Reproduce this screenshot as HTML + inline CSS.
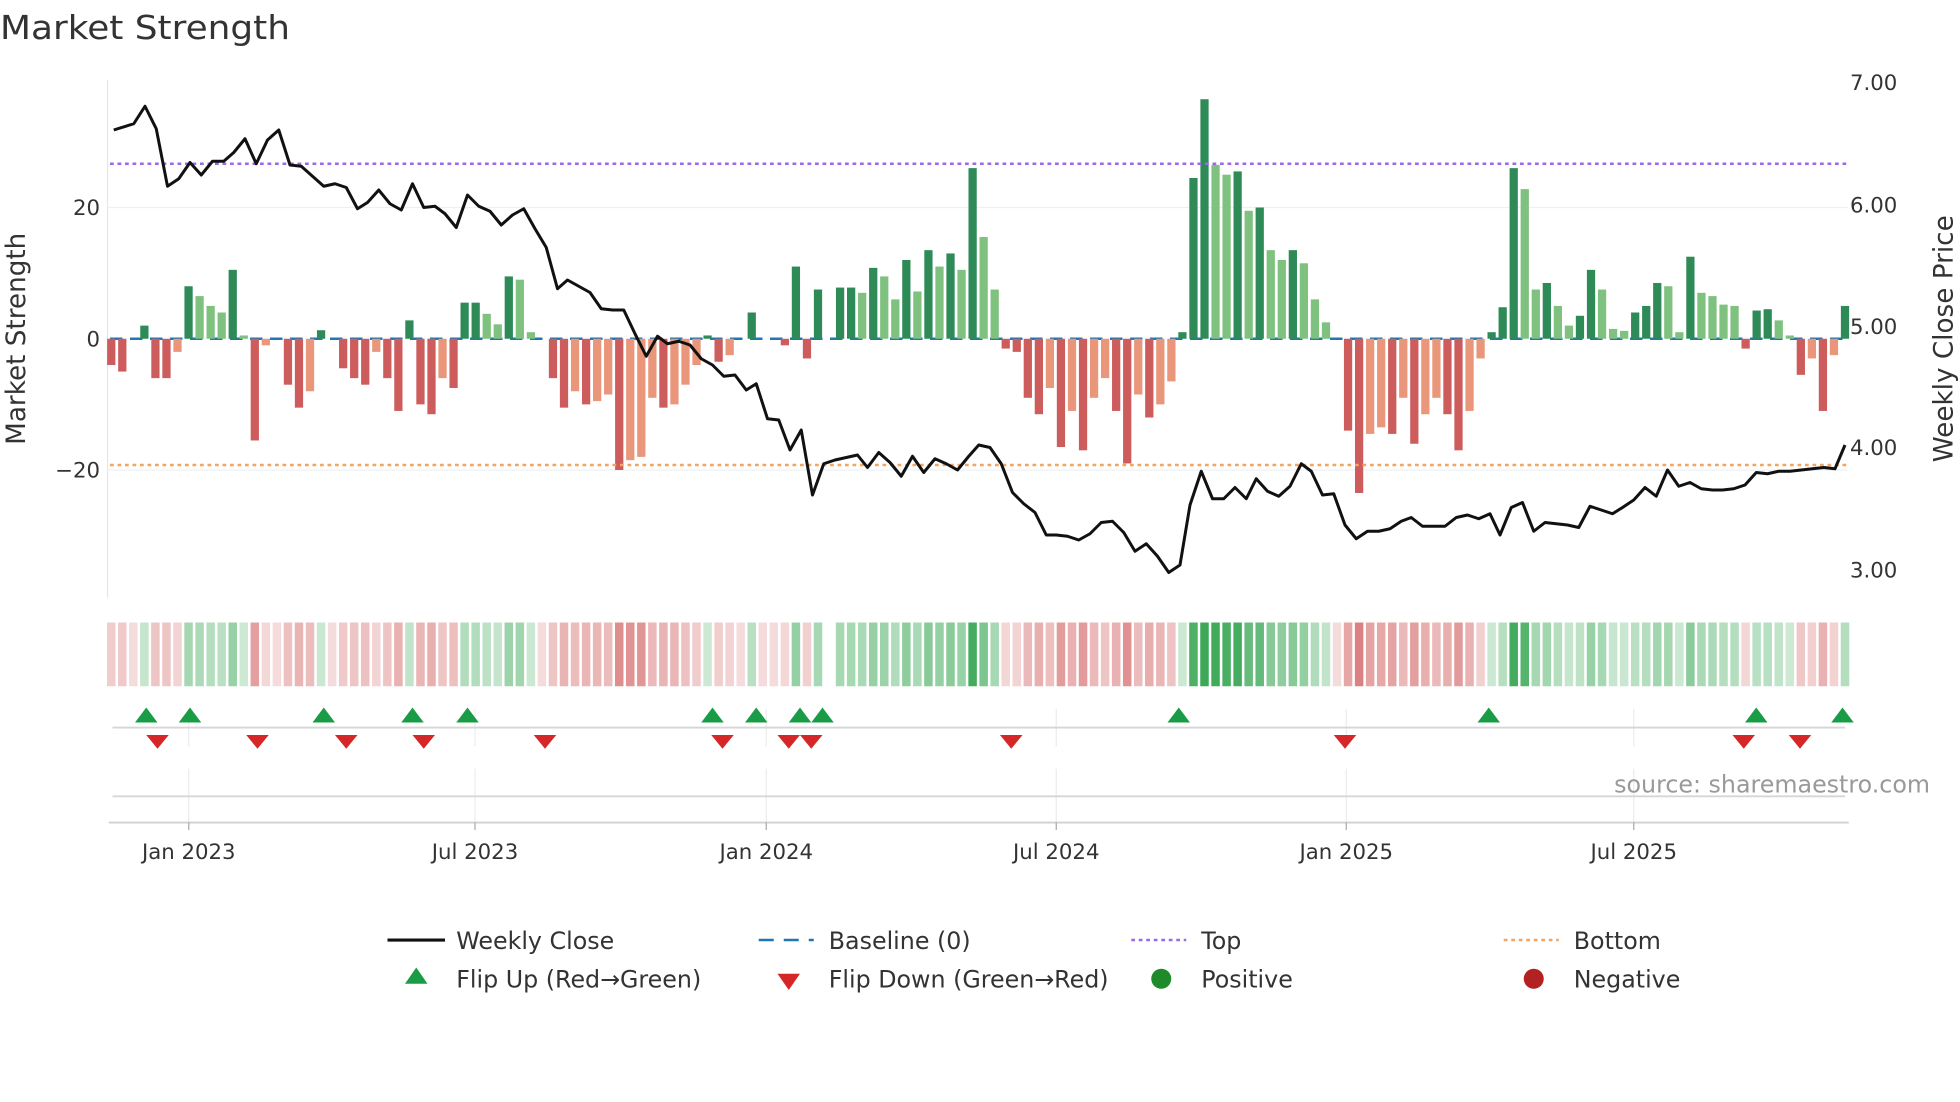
<!DOCTYPE html>
<html><head><meta charset="utf-8"><style>
html,body{margin:0;padding:0;background:#fff;width:1960px;height:1102px;overflow:hidden}
svg{display:block}
text{font-family:"DejaVu Sans","Liberation Sans",sans-serif;fill:#333}
</style></head><body>
<svg id="s" width="1960" height="1102" viewBox="0 0 1568 881.6" xmlns="http://www.w3.org/2000/svg">
<text x="0" y="31" font-size="26" textLength="232" lengthAdjust="spacingAndGlyphs">Market Strength</text>
<line x1="86" y1="64" x2="86" y2="478" stroke="#e6e6e6" stroke-width="1"/>
<line x1="86" y1="166" x2="1478" y2="166" stroke="#eef0f2"/>
<line x1="86" y1="376" x2="1478" y2="376" stroke="#eef0f2"/>
<text x="80" y="172" font-size="17" text-anchor="end">20</text>
<text x="80" y="277" font-size="17" text-anchor="end">0</text>
<text x="80" y="382" font-size="17" text-anchor="end">−20</text>
<text x="1480" y="72" font-size="17">7.00</text>
<text x="1480" y="170" font-size="17">6.00</text>
<text x="1480" y="267" font-size="17">5.00</text>
<text x="1480" y="364" font-size="17">4.00</text>
<text x="1480" y="462" font-size="17">3.00</text>
<text transform="translate(20,271) rotate(-90)" font-size="21" text-anchor="middle">Market Strength</text>
<text transform="translate(1562,271) rotate(-90)" font-size="21" text-anchor="middle">Weekly Close Price</text>
<line x1="88" y1="271" x2="1478" y2="271" stroke="#1f77b4" stroke-width="2" stroke-dasharray="10,6"/>
<g id="bars"></g>
<line x1="88" y1="131" x2="1478" y2="131" stroke="#9b6ae8" stroke-width="2" stroke-dasharray="3,3"/>
<line x1="88" y1="372" x2="1478" y2="372" stroke="#f4a460" stroke-width="2" stroke-dasharray="3,3"/>
<polyline id="price" fill="none" stroke="#111" stroke-width="2.4" stroke-linejoin="round"/>
<g id="heat"></g>
<g stroke="#ececec">
<line x1="151" y1="567" x2="151" y2="597"/><line x1="380" y1="567" x2="380" y2="597"/><line x1="613" y1="567" x2="613" y2="597"/><line x1="845" y1="567" x2="845" y2="597"/><line x1="1077" y1="567" x2="1077" y2="597"/><line x1="1307" y1="567" x2="1307" y2="597"/>
<line x1="151" y1="615" x2="151" y2="658"/><line x1="380" y1="615" x2="380" y2="658"/><line x1="613" y1="615" x2="613" y2="658"/><line x1="845" y1="615" x2="845" y2="658"/><line x1="1077" y1="615" x2="1077" y2="658"/><line x1="1307" y1="615" x2="1307" y2="658"/>
</g>
<line x1="90" y1="582" x2="1476" y2="582" stroke="#d6d6d6" stroke-width="1.5"/>
<line x1="90" y1="637" x2="1476" y2="637" stroke="#d6d6d6" stroke-width="1.5"/>
<line x1="87" y1="658" x2="1479" y2="658" stroke="#d0d0d0" stroke-width="1.5"/>
<g stroke="#aaa"><line x1="151" y1="658" x2="151" y2="664"/><line x1="380" y1="658" x2="380" y2="664"/><line x1="613" y1="658" x2="613" y2="664"/><line x1="845" y1="658" x2="845" y2="664"/><line x1="1077" y1="658" x2="1077" y2="664"/><line x1="1307" y1="658" x2="1307" y2="664"/></g>
<g id="tri"></g>
<text x="1544" y="634" font-size="19" text-anchor="end" style="fill:#999">source: sharemaestro.com</text>
<g font-size="17" text-anchor="middle">
<text x="151" y="687">Jan 2023</text><text x="380" y="687">Jul 2023</text><text x="613" y="687">Jan 2024</text><text x="845" y="687">Jul 2024</text><text x="1077" y="687">Jan 2025</text><text x="1307" y="687">Jul 2025</text>
</g>
<g font-size="19">
<line x1="310" y1="752" x2="356" y2="752" stroke="#111" stroke-width="2.5"/>
<text x="365" y="759">Weekly Close</text>
<line x1="607" y1="752" x2="651" y2="752" stroke="#1f77b4" stroke-width="2" stroke-dasharray="12,8"/>
<text x="663" y="759">Baseline (0)</text>
<line x1="905" y1="752" x2="949" y2="752" stroke="#9b6ae8" stroke-width="2" stroke-dasharray="3,3"/>
<text x="961" y="759">Top</text>
<line x1="1203" y1="752" x2="1247" y2="752" stroke="#f4a460" stroke-width="2" stroke-dasharray="3,3"/>
<text x="1259" y="759">Bottom</text>
<polygon points="324,787 342,787 333,774" fill="#1a9c47"/>
<text x="365" y="790">Flip Up (Red→Green)</text>
<polygon points="622,779 640,779 631,792" fill="#d62728"/>
<text x="663" y="790">Flip Down (Green→Red)</text>
<circle cx="929" cy="783" r="8" fill="#1f8a2a"/>
<text x="961" y="790">Positive</text>
<circle cx="1227" cy="783" r="8" fill="#b22222"/>
<text x="1259" y="790">Negative</text>
</g>
</svg>
<script>
var V=[-4,-5,0,2,-6,-6,-2,8,6.5,5,4,10.5,0.5,-15.5,-1,0,-7,-10.5,-8,1.3,0,-4.5,-6,-7,-2,-6,-11,2.8,-10,-11.5,-6,-7.5,5.5,5.5,3.8,2.2,9.5,9,1,0,-6,-10.5,-8,-10,-9.5,-8.5,-20,-18.5,-18,-9,-10.5,-10,-7,-4,0.5,-3.5,-2.5,0,4,0,0,-1,11,-3,7.5,0,7.8,7.8,7,10.8,9.5,6,12,7.2,13.5,11,13,10.5,26,15.5,7.5,-1.5,-2,-9,-11.5,-7.5,-16.5,-11,-17,-9,-6,-11,-19,-8.5,-12,-10,-6.5,1,24.5,36.5,26.5,25,25.5,19.5,20,13.5,12,13.5,11.5,6,2.5,0,-14,-23.5,-14.5,-13.5,-14.5,-9,-16,-11.5,-9,-11.5,-17,-11,-3,1,4.8,26,22.8,7.5,8.5,5,2,3.5,10.5,7.5,1.5,1.2,4,5,8.5,8,1,12.5,7,6.5,5.2,5,-1.5,4.3,4.5,2.8,0.5,-5.5,-3,-11,-2.5,5];
var X0=89,DX=8.87,ns="http://www.w3.org/2000/svg";
var off=1476-(X0+(V.length-1)*DX);
function el(t,a,p){var e=document.createElementNS(ns,t);for(var k in a)e.setAttribute(k,a[k]);p.appendChild(e);return e}
var B=document.getElementById('bars'),H=document.getElementById('heat');
for(var i=0;i<V.length;i++){var v=V[i],p=i?V[i-1]:0,x=X0+i*DX+off*(i/(V.length-1)),c;
 if(v>0)c=(v>=p)?'#2e8b57':'#7fc17f';else c=(v<=p)?'#cd5c5c':'#e9967a';
 if(v!==0){var h=Math.abs(v)*5.25;el('rect',{x:x-3.3,y:v>0?271-h:271,width:6.6,height:h,fill:c},B);}
 if(x>662&&x<672)continue;
 var a,f;if(v>0){a=Math.min(0.9,0.22+v/40);f='rgba(40,160,70,'+a+')';}else{a=Math.min(0.75,0.2+Math.abs(v)/45);f='rgba(205,80,80,'+a+')';}
 el('rect',{x:x-3.4,y:498,width:6.8,height:51,fill:f},H);}
var P=[[91,104],[107,99],[116,85],[125,103],[134,149],[143,143],[152,130],[161,140],[170,129],[179,129],[187,122],[196,111],[205,131],[214,112],[223,104],[232,132],[241,133],[250,141],[259,149],[268,147],[277,150],[286,167],[294,162],[303,152],[312,163],[321,168],[330,147],[339,166],[348,165],[356,171],[365,182],[374,156],[383,165],[392,169],[401,180],[410,172],[419,167],[428,183],[437,198],[446,231],[454,224],[463,229],[472,234],[481,247],[490,248],[499,248],[508,267],[517,285],[526,269],[534,275],[543,273],[552,276],[561,287],[570,292],[579,301],[588,300],[597,312],[605,307],[614,335],[623,336],[632,360],[641,344],[650,396],[659,371],[668,368],[677,366],[686,364],[694,374],[703,362],[712,370],[721,381],[730,365],[739,378],[748,367],[757,371],[766,376],[775,365],[783,356],[792,358],[801,371],[810,394],[819,403],[828,410],[837,428],[845,428],[854,429],[863,432],[872,427],[881,418],[890,417],[899,426],[908,441],[917,435],[926,445],[935,458],[944,452],[952,404],[961,377],[970,399],[979,399],[988,390],[997,399],[1005,383],[1014,393],[1023,397],[1032,389],[1041,371],[1049,377],[1058,396],[1067,395],[1076,420],[1085,431],[1094,425],[1103,425],[1112,423],[1121,417],[1129,414],[1138,421],[1147,421],[1156,421],[1165,414],[1174,412],[1183,415],[1192,411],[1200,428],[1209,406],[1218,402],[1227,425],[1236,418],[1245,419],[1254,420],[1263,422],[1272,405],[1281,408],[1290,411],[1298,406],[1307,400],[1316,390],[1325,397],[1334,376],[1343,389],[1352,386],[1361,391],[1370,392],[1378,392],[1387,391],[1396,388],[1405,378],[1414,379],[1423,377],[1432,377],[1441,376],[1450,375],[1459,374],[1468,375],[1476,356]];
document.getElementById('price').setAttribute('points',P.map(function(q){return q.join(',')}).join(' '));
var T=document.getElementById('tri');
[117,152,259,330,374,570,605,640,658,943,1191,1405,1474].forEach(function(x){el('polygon',{points:(x-9)+',578 '+(x+9)+',578 '+x+',566',fill:'#1a9c47'},T)});
[126,206,277,339,436,578,631,649,809,1076,1395,1440].forEach(function(x){el('polygon',{points:(x-9)+',588 '+(x+9)+',588 '+x+',599',fill:'#d62728'},T)});
</script>
</body></html>
